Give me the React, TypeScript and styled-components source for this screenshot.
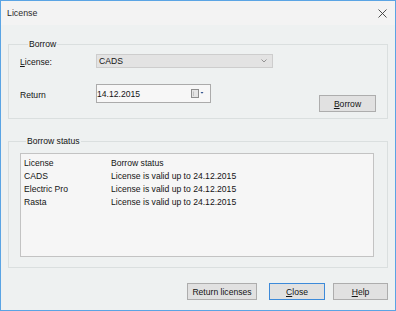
import React from "react";
import styled, { createGlobalStyle } from "styled-components";

const GlobalStyle = createGlobalStyle`
  html, body {
    margin: 0;
    padding: 0;
    background: #ffffff;
  }
  body {
    font-family: "Liberation Sans", Arial, sans-serif;
    font-size: 8.6px;
    color: #141414;
  }
`;

const Window = styled.div`
  box-sizing: border-box;
  width: 396px;
  height: 311px;
  border: 1px solid #5aa4e4;
  display: flex;
  flex-direction: column;
  background: #eef1f1;
`;

const TitleBar = styled.div`
  height: 24px;
  flex: none;
  display: flex;
  align-items: center;
  justify-content: space-between;
  padding: 0 6px 0 6px;
  background: #f3f3f3;
`;

const Title = styled.span`
  font-size: 8.8px;
  color: #2a2a2a;
`;

const CloseGlyph = styled.svg`
  width: 9px;
  height: 9px;
  margin-right: 2px;
`;

const Body = styled.div`
  flex: 1;
  display: flex;
  flex-direction: column;
  padding: 13px 7px 0 7px;
`;

const Group = styled.fieldset<{ $gap?: number; $bottom: number }>`
  margin: ${(p) => p.$gap ?? 0}px 0 0 0;
  padding: 4px 11px ${(p) => p.$bottom}px 11px;
  border: 1px solid #dadfdf;
  min-width: 0;
`;

const GroupTitle = styled.legend<{ $offset: number }>`
  padding: 0 1px;
  margin-left: ${(p) => p.$offset}px;
  line-height: 12px;
  font-size: 8.6px;
`;

const FieldRow = styled.div<{ $gap?: number }>`
  display: flex;
  align-items: flex-start;
  margin-top: ${(p) => p.$gap ?? 0}px;
`;

const FieldLabel = styled.span<{ $h: number }>`
  width: 76px;
  flex: none;
  height: ${(p) => p.$h}px;
  line-height: ${(p) => p.$h + 3}px;
`;

const Combo = styled.div`
  box-sizing: border-box;
  width: 177px;
  height: 14px;
  background: #e3e3e3;
  border: 1px solid #cdcdcd;
  display: flex;
  align-items: center;
  justify-content: space-between;
  padding: 0 5px 0 2px;
`;

const DateBox = styled.div`
  box-sizing: border-box;
  width: 115px;
  height: 19px;
  background: #f7f7f7;
  border: 1px solid #ababab;
  display: flex;
  align-items: center;
  justify-content: space-between;
  padding: 0 6px 0 0;
`;

const Spacer = styled.div`
  flex: 1;
`;

const Button = styled.button<{ $w: number; $default?: boolean }>`
  box-sizing: border-box;
  width: ${(p) => p.$w}px;
  height: 17px;
  padding: 0;
  margin: 0;
  font-family: inherit;
  font-size: 8.6px;
  color: #141414;
  background: #e1e1e1;
  border: 1px solid ${(p) => (p.$default ? "#3d8ad9" : "#adadad")};
`;

const BorrowButton = styled(Button)`
  margin-top: 11px;
`;

const ListBox = styled.div`
  box-sizing: border-box;
  height: 104px;
  margin: 2px 2px 0 0;
  background: #f6f6f6;
  border: 1px solid #c3c3c3;
  padding: 3px 0 0 3px;
`;

const ListRow = styled.div`
  display: flex;
  height: 13px;
  line-height: 13px;
`;

const NameCell = styled.span`
  width: 87px;
  flex: none;
`;

const Footer = styled.div`
  display: flex;
  justify-content: flex-end;
  margin-top: 15px;
  gap: 8px;
`;

const Wide = styled.span`
  margin-right: 4px;
  display: flex;
`;

const rows = [
  ["License", "Borrow status"],
  ["CADS", "License is valid up to 24.12.2015"],
  ["Electric Pro", "License is valid up to 24.12.2015"],
  ["Rasta", "License is valid up to 24.12.2015"],
];

export default function App() {
  return (
    <>
      <GlobalStyle />
      <Window>
        <TitleBar>
          <Title>License</Title>
          <CloseGlyph viewBox="0 0 9 9">
            <path d="M0.5 0.5 L8.5 8.5 M8.5 0.5 L0.5 8.5" stroke="#3a3a3a" strokeWidth="0.9" />
          </CloseGlyph>
        </TitleBar>
        <Body>
          <Group $bottom={6}>
            <GroupTitle $offset={8}>Borrow</GroupTitle>
            <FieldRow>
              <FieldLabel $h={14}>
                <u>L</u>icense:
              </FieldLabel>
              <Combo>
                <span>CADS</span>
                <svg width="6" height="4" viewBox="0 0 6 4">
                  <path d="M0.5 0.5 L3 3 L5.5 0.5" fill="none" stroke="#8a8a8a" strokeWidth="0.9" />
                </svg>
              </Combo>
            </FieldRow>
            <FieldRow $gap={16}>
              <FieldLabel $h={19}>Return</FieldLabel>
              <DateBox>
                <span>14.12.2015</span>
                <svg width="13" height="9" viewBox="0 0 13 9">
                  <rect x="0.5" y="0.5" width="7" height="8" fill="#e4e4e4" stroke="#8d8d8d" />
                  <line x1="2.5" y1="2.5" x2="2.5" y2="7" stroke="#c2c2c2" />
                  <path d="M9.5 3 L12.5 3 L11 4.8 Z" fill="#2d4f8a" />
                </svg>
              </DateBox>
              <Spacer />
              <BorrowButton $w={57}>
                <u>B</u>orrow
              </BorrowButton>
            </FieldRow>
          </Group>
          <Group $gap={16} $bottom={10}>
            <GroupTitle $offset={6}>Borrow status</GroupTitle>
            <ListBox>
              {rows.map(([name, status]) => (
                <ListRow key={name}>
                  <NameCell>{name}</NameCell>
                  <span>{status}</span>
                </ListRow>
              ))}
            </ListBox>
          </Group>
          <Footer>
            <Wide>
              <Button $w={70}>Return licenses</Button>
            </Wide>
            <Button $w={56} $default>
              <u>C</u>lose
            </Button>
            <Button $w={55}>
              <u>H</u>elp
            </Button>
          </Footer>
        </Body>
      </Window>
    </>
  );
}
